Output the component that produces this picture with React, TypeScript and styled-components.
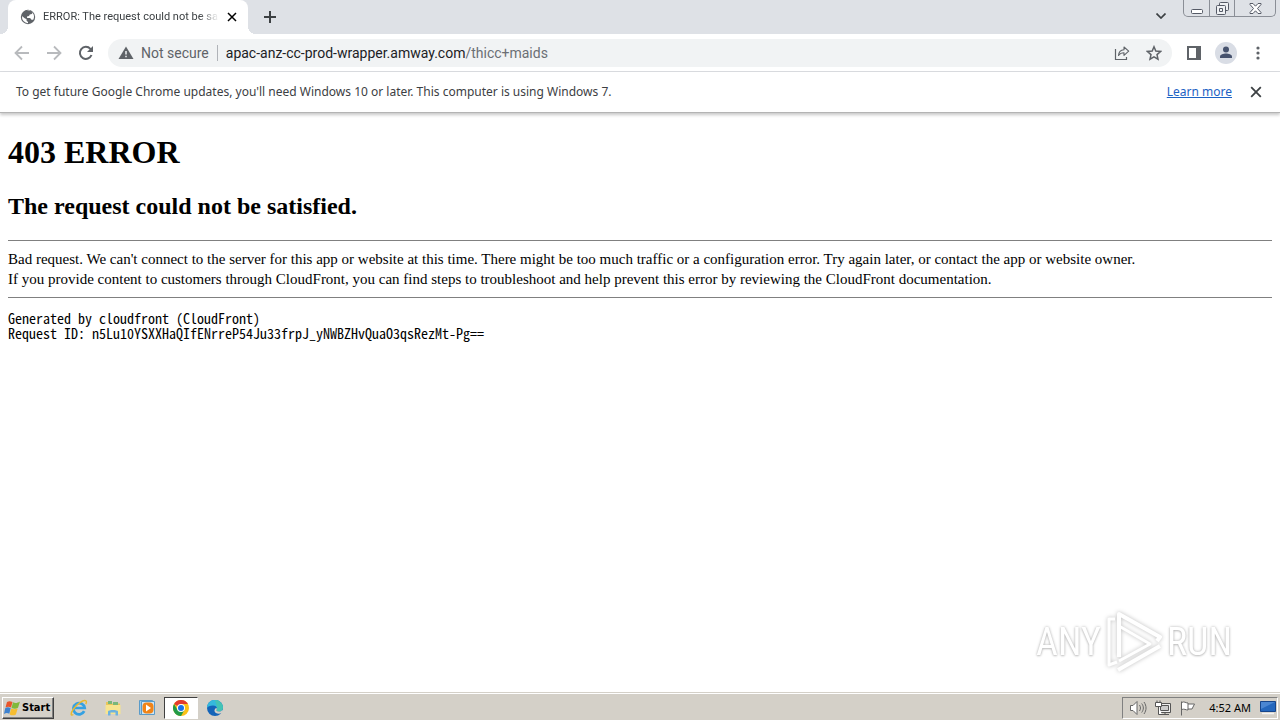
import React from "react";
import styled, { createGlobalStyle } from "styled-components";

const GlobalStyle = createGlobalStyle`
  *, *::before, *::after { box-sizing: border-box; }
  body { margin: 0; background: #fff; }
  button { font: inherit; color: inherit; }
`;

const uiFont = `"Noto Sans", "Open Sans", sans-serif`;
const compactFont = `Roboto, "Open Sans", sans-serif`;

const Screen = styled.div`
  display: flex;
  flex-direction: column;
  min-height: 100vh;
  font-family: ${uiFont};
`;

const TabStrip = styled.header`
  display: flex;
  align-items: flex-start;
  height: 34px;
  padding-left: 8px;
  background: #dee1e6;
`;

const Tab = styled.div`
  position: relative;
  display: flex;
  align-items: center;
  width: 240px;
  height: 34px;
  padding: 0 8px 0 12px;
  border-radius: 8px 8px 0 0;
  background: #fff;

  &::before, &::after {
    content: "";
    position: absolute;
    bottom: 0;
    width: 8px;
    height: 8px;
  }
  &::before { left: -8px; background: radial-gradient(circle at 0 0, transparent 8px, #fff 8px); }
  &::after { right: -8px; background: radial-gradient(circle at 100% 0, transparent 8px, #fff 8px); }
`;

const TabTitle = styled.span`
  flex: 1;
  margin: 0 5px 0 7px;
  overflow: hidden;
  white-space: nowrap;
  font-family: ${compactFont};
  font-size: 11px;
  line-height: 16px;
  color: #3c4043;
  mask-image: linear-gradient(to right, #000 calc(100% - 20px), transparent);
`;

const IconButton = styled.button<{ $size?: number }>`
  display: flex;
  flex: none;
  align-items: center;
  justify-content: center;
  width: ${(p) => p.$size ?? 32}px;
  height: ${(p) => p.$size ?? 32}px;
  padding: 0;
  border: 0;
  border-radius: 50%;
  background: none;

  &:disabled { color: #b8babd; }
`;

const NewTab = styled(IconButton)`
  margin: 1px 0 0 6px;
  color: #3c4043;
`;

const WindowTools = styled.div`
  display: flex;
  margin-left: auto;
  padding-right: 4px;
  gap: 6px;
  color: #3c4043;
`;

const Caption = styled.div`
  display: flex;
  height: 17px;
  border: 1px solid #8a8e96;
  border-top: 0;
  border-radius: 0 0 5px 5px;
`;

const CaptionButton = styled.button<{ $width: number }>`
  display: flex;
  align-items: center;
  justify-content: center;
  width: ${(p) => p.$width}px;
  padding: 0;
  border: 0;
  background: none;

  & + & { border-left: 1px solid #8a8e96; }
`;

const Toolbar = styled.nav`
  display: flex;
  align-items: center;
  height: 38px;
  padding: 0 6px;
  border-bottom: 1px solid #dadce0;
  color: #5f6368;
`;

const AddressBar = styled.div`
  display: flex;
  flex: 1;
  align-items: center;
  height: 28px;
  margin: 0 6px;
  padding: 0 2px 0 10px;
  border-radius: 14px;
  background: #f1f3f4;
  font-family: ${compactFont};
  font-size: 14px;
  line-height: 20px;
`;

const Security = styled.button`
  display: flex;
  align-items: center;
  gap: 7px;
  padding: 0 8px 0 0;
  border: 0;
  border-right: 1px solid #b0b3b8;
  background: none;
  line-height: 16px;
  white-space: nowrap;
  color: #5f6368;
`;

const Url = styled.a`
  flex: 1;
  margin-left: 8px;
  color: #6b6f74;
  text-decoration: none;
`;

const Host = styled.span`
  color: #202124;
`;

const InfoBar = styled.aside`
  display: flex;
  align-items: center;
  height: 41px;
  padding: 0 8px 0 16px;
  border-bottom: 1px solid #b4b4b4;
  box-shadow: 0 2px 3px #c8c8c8;
  font-size: 12px;
  line-height: 16px;
  color: #3c4043;
`;

const LearnMore = styled.a`
  margin: 0 8px 0 auto;
  color: #1c62c4;
`;

const Page = styled.main`
  flex: 1;
  padding: 0 8px;
  font-family: "Liberation Serif", serif;
  font-size: 15px;
  line-height: 20px;
  color: #000;
`;

const Title = styled.h1`
  margin: 21px 0;
  font-size: 32px;
  line-height: 37px;
`;

const Subtitle = styled.h2`
  margin: 20px 0;
  font-size: 24px;
  line-height: 28px;
`;

const Rule = styled.hr`
  height: 1px;
  margin: 8px 0;
  border: 0;
  background: #808080;
`;

const Details = styled.pre`
  margin: 13px 0;
  font-family: "Noto Sans Mono CJK SC", "DejaVu Sans Mono", monospace;
  font-size: 14px;
  line-height: 15px;
`;

const Watermark = styled.div`
  position: fixed;
  right: 48px;
  bottom: 46px;
  display: flex;
  align-items: center;
  gap: 4px;
  font-family: "Roboto Condensed", Roboto, sans-serif;
  font-size: 38px;
  line-height: 64px;
  color: #fff;
  text-shadow: 0 0 3px #b4b4b4, 0 1px 2px #d0d0d0;
  pointer-events: none;

  svg { filter: drop-shadow(0 0 2px #bcbcbc); }
`;

const Taskbar = styled.footer`
  display: flex;
  align-items: center;
  height: 28px;
  padding: 2px 2px 0;
  border-top: 1px solid #d4d0c8;
  background: #d4d0c8;
  box-shadow: inset 0 1px #fff;
  font-size: 11px;
  line-height: 16px;
  color: #000;
`;

const StartButton = styled.button`
  display: flex;
  align-items: center;
  gap: 1px;
  width: 52px;
  height: 22px;
  margin-right: 8px;
  padding: 0 1px;
  border: 1px solid;
  border-color: #fff #404040 #404040 #fff;
  background: #d4d0c8;
  box-shadow: inset -1px -1px #808080;
  font-family: "DejaVu Sans Condensed", "Open Sans", sans-serif;
  font-weight: 700;
`;

const TaskButton = styled.button<{ $active?: boolean }>`
  display: flex;
  align-items: center;
  justify-content: center;
  width: 34px;
  height: 22px;
  padding: 0;
  border: 1px solid;
  border-color: ${(p) => (p.$active ? "#404040 #fff #fff #404040" : "transparent")};
  background: ${(p) => (p.$active ? "#fff" : "none")};
`;

const Tray = styled.div`
  display: flex;
  align-items: center;
  gap: 7px;
  height: 22px;
  margin-left: auto;
  padding: 0 1px 0 6px;
  border: 1px solid;
  border-color: #808080 #fff #fff #808080;
`;

const Clock = styled.time`
  margin: 0 2px 0 6px;
  white-space: nowrap;
`;

const line = { fill: "none", stroke: "currentColor" } as const;

const GlobeIcon = () => (
  <svg width="16" height="16" viewBox="0 0 16 16">
    <circle cx="8" cy="8" r="7.2" fill="#5f6368" />
    <path d="M2.2 7.2 5 9.5l1.5.5v1.5L8 13v1.2A6.3 6.3 0 0 1 2 7.2ZM7 2l3-.3 2.7 1.8-.9 1.6-2 .3-.8 1.6-2 .5.1 1.6h3l1.4 1.6 1.7.1c1.6-3 .7-6-1.2-7.6C10.300 1.600 8.500 1.500 7 2Z" fill="#fff" />
  </svg>
);

const Cross = ({ size, weight = 2 }: { size: number; weight?: number }) => (
  <svg width={size} height={size} viewBox="0 0 10 10">
    <path d="m1 1 8 8M9 1 1 9" {...line} strokeWidth={weight} />
  </svg>
);

const Arrow = ({ forward }: { forward?: boolean }) => (
  <svg width="16" height="16" viewBox="0 0 16 16">
    <path d={forward ? "M1 8h13M8 1.500 14.500 8 8 14.500" : "M15 8H2M8 1.500 1.500 8 8 14.500"} {...line} strokeWidth="1.800" />
  </svg>
);

const ReloadIcon = () => (
  <svg width="16" height="16" viewBox="0 0 16 16">
    <path d="M13.500 10A6 6 0 1 1 12.400 3.900L14 5.500" {...line} strokeWidth="2" />
    <path d="M15 1v6H9Z" fill="currentColor" />
  </svg>
);

const WarningIcon = () => (
  <svg width="16" height="16" viewBox="0 0 16 16">
    <path d="M8 1.500 15.500 14H.5Z" fill="#5f6368" />
    <path d="M8 6v3.500M8 10.700v1.600" stroke="#f1f3f4" strokeWidth="1.500" />
  </svg>
);

const ShareIcon = () => (
  <svg width="16" height="16" viewBox="0 0 16 16">
    <path d="M1.500 4v10.500h11V12" {...line} strokeWidth="1.200" />
    <path d="M4.500 10.500C4.700 7 6.500 5 10 4.700V2l4.700 4.200L10 10.300V7.800C7.500 7.800 5.800 8.700 4.500 10.500Z" {...line} strokeWidth="1.100" strokeLinejoin="round" />
  </svg>
);

const StarIcon = () => (
  <svg width="16" height="16" viewBox="0 0 16 16">
    <path d="m8 1.800 1.800 4.300 4.700.4-3.500 3.100 1 4.600L8 11.800l-4 2.400 1-4.600-3.500-3.100 4.700-.4Z" {...line} strokeWidth="1.500" />
  </svg>
);

const PanelIcon = () => (
  <svg width="14" height="14" viewBox="0 0 14 14">
    <path d="M1 1h12v12H1Z" {...line} strokeWidth="2" />
    <path d="M9 1h4v12H9Z" fill="currentColor" />
  </svg>
);

const ProfileIcon = () => (
  <svg width="22" height="22" viewBox="0 0 22 22">
    <circle cx="11" cy="11" r="11" fill="#d9dde5" />
    <circle cx="11" cy="7.600" r="3" fill="#47536e" />
    <path d="M5 16v-1.500c0-2 3.500-3 6-3s6 1 6 3V16Z" fill="#47536e" />
  </svg>
);

const MenuIcon = () => (
  <svg width="4" height="14" viewBox="0 0 4 14" fill="currentColor">
    <circle cx="2" cy="2" r="1.600" /><circle cx="2" cy="7" r="1.600" /><circle cx="2" cy="12" r="1.600" />
  </svg>
);

const PlayLogo = () => (
  <svg width="58" height="64" viewBox="0 0 58 64" fill="none" stroke="#fff" strokeWidth="4" strokeLinejoin="round">
    <path d="M14 47V4l41 23-3 4" />
    <path d="M14 16 45 34 14 51" strokeWidth="3" />
    <path d="M10 9H4v46l8-3" strokeWidth="3" />
    <path d="M13 60 55 36" />
  </svg>
);

const WindowsFlag = () => (
  <svg width="17" height="16" viewBox="0 0 17 16">
    <path d="M3 2c2-1.300 3.500-1 5.500 0L7 7.500C5 6.500 3.500 6.500 1.500 7.600Z" fill="#e8552b" />
    <path d="M9 2.300c2 1 4 1 7-.8L14 7.800c-2 1.200-4 1.200-6.500.1Z" fill="#80b93b" />
    <path d="M1.200 8.200c2-1.200 3.500-1 5.500 0L5.300 13.800C3.500 12.800 2 12.800 0 14Z" fill="#3e82cf" />
    <path d="M7.200 8.600c2 1 4 1 6.500 0l-1.800 5.800c-2 1.200-4 1.200-6.300 0Z" fill="#f6bd30" />
  </svg>
);

const ExplorerIcon = () => (
  <svg width="18" height="18" viewBox="0 0 18 18" fill="none">
    <path d="M14.200 12.200A5.700 5.700 0 1 1 14.700 9H5" stroke="#35a1e2" strokeWidth="2.700" />
    <path d="M3.300 15.500C.5 17.500.3 14.500 3.500 10 7 5 13 .7 15.600 1.700c1.200.5.900 2 .2 3.400" stroke="#e9b92d" strokeWidth="1.400" />
  </svg>
);

const FolderIcon = () => (
  <svg width="18" height="18" viewBox="0 0 18 18">
    <path d="M2 3h5l1 1.500h8V15H2Z" fill="#e9c65a" />
    <path d="M4 2h4v3H4ZM9 3h5v3H9Z" fill="#79b779" />
    <path d="M1.500 6h15v9h-15Z" fill="#f7e48f" />
    <path d="M4 16.500v-4c0-2 10-2 10 0v4h-2.500v-3h-5v3Z" fill="#6cb2df" />
  </svg>
);

const MediaIcon = () => (
  <svg width="18" height="18" viewBox="0 0 18 18">
    <path d="M1.500 1.500h13v14h-13Z" fill="#9ccbea" stroke="#5a9bc9" />
    <path d="M3.500 2.500h13v13h-13Z" fill="#cfe6f5" stroke="#5a9bc9" />
    <rect x="4.500" y="3.500" width="11" height="11" rx="4" fill="#f08418" />
    <path d="m8 5.500 5 3.500-5 3.500Z" fill="#fff" />
  </svg>
);

const ChromeIcon = () => (
  <svg width="16" height="16" viewBox="0 0 16 16">
    <circle cx="8" cy="8" r="8" fill="#fbc116" />
    <path d="M8 8 1.070 4A8 8 0 0 1 14.930 4H8Z" fill="#e33b2e" />
    <path d="M1.070 4A8 8 0 0 0 8 16l3.460-6L8 8 4.540 10Z" fill="#229b48" />
    <circle cx="8" cy="8" r="4" fill="#fff" />
    <circle cx="8" cy="8" r="3" fill="#1a73e8" />
  </svg>
);

const EdgeIcon = () => (
  <svg width="16" height="16" viewBox="0 0 16 16">
    <circle cx="8" cy="8" r="8" fill="#1464b8" />
    <path d="M0 8A8 8 0 0 1 16 7.500c0 2.800-2 4-4.300 4-1.700 0-2.700-.8-2.200-1.500 1.400-2.300-.5-4.500-3.500-4.500S.5 6.500 0 8Z" fill="#35b9dc" />
    <path d="M8 0a8 8 0 0 1 8 7.500c0 2.800-2 4-4.300 4-1.700 0-2.700-.8-2.200-1.500C11 7 9 5 8 0Z" fill="#4fc99a" opacity=".6" />
    <path d="M9.500 10c-.5.700.5 1.500 2.200 1.500 1.600 0 3-.5 3.800-1.800l.5 1.800-1.500 1.700c-3 1-6.500.3-7-2.200-.3-1.500 1-3 2-3 .5.700.5 1.300 0 2Z" fill="#d4d0c8" />
  </svg>
);

const SpeakerIcon = () => (
  <svg width="18" height="16" viewBox="0 0 18 16" fill="none" stroke="#666">
    <path d="M1.500 5.500H4L8 1.500v13l-4-4H1.500Z" fill="#fff" />
    <path d="M10.500 5c1.300 2 1.300 4 0 6M12.700 3.500c2.200 3 2.200 6 0 9M15 2c2.700 4 2.700 8 0 12" />
  </svg>
);

const NetworkIcon = () => (
  <svg width="18" height="16" viewBox="0 0 18 16" fill="none" stroke="#555">
    <path d="M4.500 3.500h12v9h-12ZM7 14.500h8M11 12.500v2" fill="#eee" />
    <path d="M6.500 5.500h8v5h-8Z" fill="#ccc" />
    <path d="M1.500 2.500h6v4h-6ZM3 .5v2M6 .5v2M4.500 6.500v8H8" fill="#fff" />
  </svg>
);

const FlagIcon = () => (
  <svg width="17" height="16" viewBox="0 0 17 16" fill="#fff" stroke="#666">
    <path d="M2.500 15.500V1.500M2.500 2.500c3-1.500 4 .5 6.500.5v7c-2.500 0-3.500-1.500-6.500-.5ZM9 4h6.500l-2.500 5H9" />
  </svg>
);

const DesktopIcon = () => (
  <svg width="16" height="14" viewBox="0 0 16 14">
    <path d="M.5.5h15v10H.5Z" fill="#2467bd" stroke="#16458b" />
    <path d="M1 1h14L1 8Z" fill="#4a86d2" />
    <path d="M2 12.500h12" stroke="#f4f4f4" strokeWidth="1.500" />
  </svg>
);

export default function App() {
  return (
    <Screen>
      <GlobalStyle />
      <TabStrip>
        <Tab>
          <GlobeIcon />
          <TabTitle>ERROR: The request could not be sa</TabTitle>
          <IconButton $size={16} aria-label="Close tab"><Cross size={10} weight={1.5} /></IconButton>
        </Tab>
        <NewTab aria-label="New tab">
          <svg width="12" height="12" viewBox="0 0 12 12"><path d="M6 0v12M0 6h12" {...line} strokeWidth="2" /></svg>
        </NewTab>
        <WindowTools>
          <IconButton aria-label="Search tabs">
            <svg width="10" height="6" viewBox="0 0 10 6"><path d="m.5.5 4.500 4.500L9.500.5" {...line} strokeWidth="1.700" /></svg>
          </IconButton>
          <Caption>
            <CaptionButton $width={25} aria-label="Minimize">
              <svg width="12" height="15" viewBox="0 0 12 15"><rect x=".5" y="8.500" width="11" height="4" rx="1" fill="#fff" stroke="#555a66" /></svg>
            </CaptionButton>
            <CaptionButton $width={25} aria-label="Restore">
              <svg width="13" height="13" viewBox="0 0 13 13" fill="#eef0f3" stroke="#555a66">
                <rect x="3.500" y=".5" width="9" height="8" rx="1" /><rect x=".5" y="3.500" width="9" height="9" rx="1" /><path d="M3.500 6.500h3v3h-3Z" />
              </svg>
            </CaptionButton>
            <CaptionButton $width={41} aria-label="Close">
              <svg width="13" height="11" viewBox="0 0 13 11"><path d="M1 .5h3l2.500 2.700L9 .5h3v1L8.500 5.500 12 9.500v1H9L6.500 7.800 4 10.500H1v-1l3.500-4L1 1.500Z" fill="#fff" stroke="#555a66" /></svg>
            </CaptionButton>
          </Caption>
        </WindowTools>
      </TabStrip>

      <Toolbar aria-label="Browser">
        <IconButton disabled aria-label="Back"><Arrow /></IconButton>
        <IconButton disabled aria-label="Forward"><Arrow forward /></IconButton>
        <IconButton aria-label="Reload"><ReloadIcon /></IconButton>
        <AddressBar>
          <Security><WarningIcon />Not secure</Security>
          <Url href="#"><Host>apac-anz-cc-prod-wrapper.amway.com</Host>/thicc+maids</Url>
          <IconButton aria-label="Share"><ShareIcon /></IconButton>
          <IconButton aria-label="Bookmark"><StarIcon /></IconButton>
        </AddressBar>
        <IconButton aria-label="Side panel"><PanelIcon /></IconButton>
        <IconButton aria-label="Profile"><ProfileIcon /></IconButton>
        <IconButton aria-label="Menu"><MenuIcon /></IconButton>
      </Toolbar>

      <InfoBar>
        <span>To get future Google Chrome updates, you'll need Windows 10 or later. This computer is using Windows 7.</span>
        <LearnMore href="#">Learn more</LearnMore>
        <IconButton aria-label="Dismiss"><Cross size={12} weight={1.5} /></IconButton>
      </InfoBar>

      <Page>
        <Title>403 ERROR</Title>
        <Subtitle>The request could not be satisfied.</Subtitle>
        <Rule />
        Bad request. We can't connect to the server for this app or website at this time. There might be too much traffic or a configuration error. Try again later, or contact the app or website owner.
        <br />
        If you provide content to customers through CloudFront, you can find steps to troubleshoot and help prevent this error by reviewing the CloudFront documentation.
        <Rule />
        <Details>{"Generated by cloudfront (CloudFront)\nRequest ID: n5Lu10YSXXHaQIfENrreP54Ju33frpJ_yNWBZHvQuaO3qsRezMt-Pg=="}</Details>
      </Page>

      <Watermark><span>ANY</span><PlayLogo /><span>RUN</span></Watermark>

      <Taskbar>
        <StartButton><WindowsFlag />Start</StartButton>
        <TaskButton aria-label="Internet Explorer"><ExplorerIcon /></TaskButton>
        <TaskButton aria-label="Windows Explorer"><FolderIcon /></TaskButton>
        <TaskButton aria-label="Media Player"><MediaIcon /></TaskButton>
        <TaskButton $active aria-label="Google Chrome"><ChromeIcon /></TaskButton>
        <TaskButton aria-label="Microsoft Edge"><EdgeIcon /></TaskButton>
        <Tray>
          <SpeakerIcon /><NetworkIcon /><FlagIcon />
          <Clock>4:52 AM</Clock>
          <DesktopIcon />
        </Tray>
      </Taskbar>
    </Screen>
  );
}
